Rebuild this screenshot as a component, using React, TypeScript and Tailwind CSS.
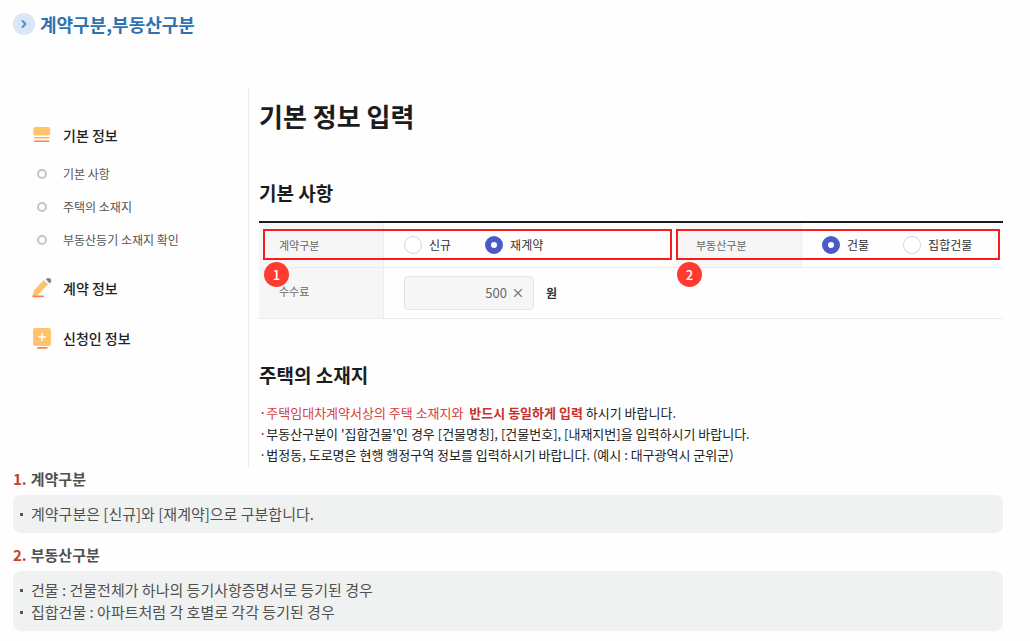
import { useState, type ReactNode } from 'react';
import { ChevronRight, X } from 'lucide-react';

function CardIcon() {
  return (
    <svg viewBox="0 0 18 18" className="size-[18px] shrink-0" aria-hidden="true">
      <rect x="0.2" y="1" width="17" height="8.4" rx="2" fill="#ffc36b" />
      <rect x="1" y="11" width="15.4" height="1.6" rx="0.6" fill="#ffb257" />
      <rect x="1" y="14.4" width="15.4" height="1.7" rx="0.6" fill="#ff7f4d" />
    </svg>
  );
}

function PencilIcon() {
  return (
    <svg viewBox="0 0 18 20" className="h-5 w-[18px] shrink-0 overflow-visible" aria-hidden="true">
      <path d="M10.8 2.4 14.6 6.2 4.4 17 0 18.2 1.4 12.4Z" fill="#ffc36b" stroke="#ffc36b" strokeWidth="1" strokeLinejoin="round" />
      <path d="M12.8 1.2Q14.4-.4 16.6.2 18.8 1 18.2 3.2 17.8 4.6 16.8 5.4Z" fill="#7d808a" />
      <rect x="-0.5" y="17.6" width="11.4" height="1.7" rx="0.6" fill="#ff7f4d" />
    </svg>
  );
}

function PlusCardIcon() {
  return (
    <svg viewBox="0 0 18 22" className="h-[22px] w-[18px] shrink-0" aria-hidden="true">
      <rect x="0.1" y="1" width="17.8" height="18" rx="2" fill="#ffc36b" />
      <path d="M9 6v8M5 10h8" stroke="#fff" strokeWidth="1.5" />
      <rect x="4" y="20" width="10.6" height="1.7" rx="0.6" fill="#ff7f4d" />
    </svg>
  );
}

function MenuLink({ icon, children }: { icon: ReactNode; children: ReactNode }) {
  return (
    <a href="#" className="flex h-6 items-center gap-3 text-sm font-medium text-[#222]">
      {icon}
      {children}
    </a>
  );
}

function SubLink({ children }: { children: ReactNode }) {
  return (
    <li>
      <a href="#" className="flex h-5 items-center gap-3 text-xs text-[#555]">
        <span className="flex w-[18px] justify-center">
          <span className="size-[10px] rounded-full border-2 border-[#c4c4c4]" />
        </span>
        {children}
      </a>
    </li>
  );
}

interface RadioGroupProps {
  name: string;
  options: string[];
  initial: string;
}

function RadioGroup({ name, options, initial }: RadioGroupProps) {
  const [value, setValue] = useState(initial);
  return (
    <div className="flex gap-[34px]" role="radiogroup" aria-label={name}>
      {options.map((option) => (
        <label key={option} className="flex items-center gap-[7px] whitespace-nowrap text-xs text-[#333]">
          <input
            type="radio"
            name={name}
            checked={value === option}
            onChange={() => setValue(option)}
            className="size-[18px] appearance-none rounded-full border border-[#d5d5d5] bg-white checked:border-[6px] checked:border-[#4a5bc7]"
          />
          {option}
        </label>
      ))}
    </div>
  );
}

function Callout({ number, className }: { number: number; className: string }) {
  return (
    <div className={`pointer-events-none absolute top-2 h-[31px] border-2 border-[#f81d1d] ${className}`}>
      <span className="absolute top-[31px] -left-px flex size-[25px] items-center justify-center rounded-full bg-[#ff3b30] text-[13px] font-medium text-white">
        {number}
      </span>
    </div>
  );
}

function Note({ number, title, items }: { number: number; title: string; items: string[] }) {
  return (
    <section className="text-[15px] leading-[22px] text-[#505050]">
      <h3 className="flex gap-1 font-bold">
        <span className="text-[#c0432f]">{number}.</span>
        {title}
      </h3>
      <ul className="mt-[5px] rounded-lg bg-[#f0f2f1] px-[7px] py-2">
        {items.map((item) => (
          <li key={item} className="flex items-center gap-2">
            <span className="size-[3px] bg-[#555]" />
            {item}
          </li>
        ))}
      </ul>
    </section>
  );
}

export default function App() {
  const [fee, setFee] = useState('500');
  const label = 'border-r border-b border-[#ececec] bg-[#f6f6f6] pl-5 text-left text-[11px] font-normal text-[#666]';
  const cell = 'border-b border-[#ececec] pl-5';

  return (
    <div className="min-h-screen bg-[#fefefe] pt-3 pr-[27px] pb-2 pl-[13px] font-['Noto_Sans_CJK_KR','Noto_Sans',sans-serif]">
      <header className="flex h-6 items-center gap-[5px]">
        <span className="flex size-[22px] items-center justify-center rounded-full bg-[#dbe7f4]">
          <ChevronRight className="size-3 text-[#4a90d2]" strokeWidth={4} />
        </span>
        <h1 className="text-lg leading-6 font-bold text-[#2d73b4]">계약구분,부동산구분</h1>
      </header>

      <div className="mt-[52px] flex">
        <nav className="w-[235px] shrink-0 pt-[35px] pl-5">
          <MenuLink icon={<CardIcon />}>기본 정보</MenuLink>
          <ul className="mt-[17px] mb-[26px] flex flex-col gap-[13px]">
            <SubLink>기본 사항</SubLink>
            <SubLink>주택의 소재지</SubLink>
            <SubLink>부동산등기 소재지 확인</SubLink>
          </ul>
          <div className="flex flex-col gap-[26px]">
            <MenuLink icon={<PencilIcon />}>계약 정보</MenuLink>
            <MenuLink icon={<PlusCardIcon />}>신청인 정보</MenuLink>
          </div>
        </nav>

        <main className="min-w-0 flex-1 border-l border-[#ececec] pt-[10px] pb-[3px] pl-[10px] text-[#1c1c1c]">
          <h2 className="text-[26px] leading-9 font-bold">기본 정보 입력</h2>

          <h3 className="mt-[45px] text-[19px] leading-7 font-bold">기본 사항</h3>
          <div className="relative mt-[14px]">
            <table className="w-full table-fixed border-separate border-spacing-0 border-t-2 border-[#1c1c1c]">
              <colgroup>
                <col className="w-[125px]" />
                <col className="w-[292px]" />
                <col className="w-[126px]" />
                <col />
              </colgroup>
              <tbody>
                <tr className="h-[45px]">
                  <th scope="row" className={label}>계약구분</th>
                  <td className={cell}>
                    <RadioGroup name="계약구분" options={['신규', '재계약']} initial="재계약" />
                  </td>
                  <th scope="row" className={label}>부동산구분</th>
                  <td className={cell}>
                    <RadioGroup name="부동산구분" options={['건물', '집합건물']} initial="건물" />
                  </td>
                </tr>
                <tr className="h-[51px]">
                  <th scope="row" className={`${label} pb-1`}>
                    <label htmlFor="fee">수수료</label>
                  </th>
                  <td colSpan={3} className={cell}>
                    <div className="flex items-center gap-3">
                      <div className="flex h-[34px] w-[130px] items-center gap-1 rounded border border-[#e4e4e4] bg-[#f6f6f6] pr-2">
                        <input
                          id="fee"
                          type="text"
                          value={fee}
                          onChange={(event) => setFee(event.target.value)}
                          className="min-w-0 flex-1 bg-transparent text-right text-[13px] text-[#666] outline-none"
                        />
                        <button type="button" aria-label="지우기" onClick={() => setFee('')}>
                          <X className="size-[14px] text-[#777]" strokeWidth={2} />
                        </button>
                      </div>
                      <span className="text-xs font-bold text-[#333]">원</span>
                    </div>
                  </td>
                </tr>
              </tbody>
            </table>
            <Callout number={1} className="left-1 w-[409px]" />
            <Callout number={2} className="right-[3px] left-[417px]" />
          </div>

          <h3 className="mt-[42px] text-[19px] leading-7 font-bold">주택의 소재지</h3>
          <ul className="mt-[13px] text-[13px] leading-[21px] text-[#222]">
            <li className="flex">
              <span>·</span>
              <p>
                <span className="text-[#d5403f]">
                  주택임대차계약서상의 주택 소재지와&nbsp; <strong className="font-bold text-[#c9302f]">반드시 동일하게 입력</strong>
                </span>{' '}
                하시기 바랍니다.
              </p>
            </li>
            <li className="flex">
              <span>·</span>
              <p>부동산구분이 '집합건물'인 경우 [건물명칭], [건물번호], [내재지번]을 입력하시기 바랍니다.</p>
            </li>
            <li className="flex">
              <span>·</span>
              <p>법정동, 도로명은 현행 행정구역 정보를 입력하시기 바랍니다. (예시 : 대구광역시 군위군)</p>
            </li>
          </ul>
        </main>
      </div>

      <div className="flex flex-col gap-[11px]">
        <Note number={1} title="계약구분" items={['계약구분은 [신규]와 [재계약]으로 구분합니다.']} />
        <Note
          number={2}
          title="부동산구분"
          items={['건물 : 건물전체가 하나의 등기사항증명서로 등기된 경우', '집합건물 : 아파트처럼 각 호별로 각각 등기된 경우']}
        />
      </div>
    </div>
  );
}
